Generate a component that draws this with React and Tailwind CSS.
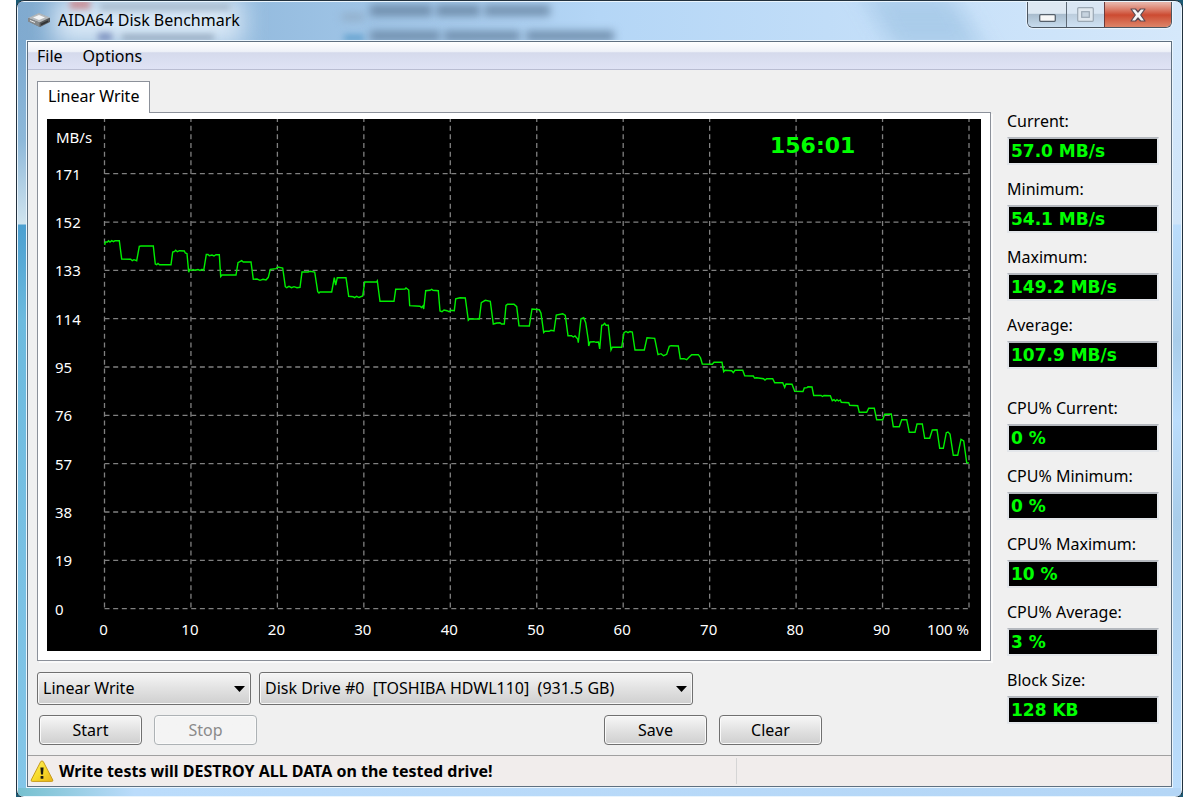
import { useState } from 'react'

const READOUTS = [
  { id: 'current', label: 'Current:', value: '57.0 MB/s' },
  { id: 'minimum', label: 'Minimum:', value: '54.1 MB/s' },
  { id: 'maximum', label: 'Maximum:', value: '149.2 MB/s' },
  { id: 'average', label: 'Average:', value: '107.9 MB/s' },
]

const CPU_READOUTS = [
  { id: 'cpu-current', label: 'CPU% Current:', value: '0 %' },
  { id: 'cpu-minimum', label: 'CPU% Minimum:', value: '0 %' },
  { id: 'cpu-maximum', label: 'CPU% Maximum:', value: '10 %' },
  { id: 'cpu-average', label: 'CPU% Average:', value: '3 %' },
  { id: 'block-size', label: 'Block Size:', value: '128 KB' },
]

const SPEEDS = [171, 152, 133, 114, 95, 76, 57, 38, 19, 0]
const PERCENTS = [0, 10, 20, 30, 40, 50, 60, 70, 80, 90]

const TRACE = `104.7,245 105.3,242 107.5,242 108.5,240.7 110,242 111.7,240.7 113.5,241.7 115,240.7 119.3,240.7 121.7,259
130.7,259.3 132.3,260.7 134,259.7 136.7,260.7 139.3,246.3 141,246 153.3,246 155.3,264 156.7,264.7 158,263.5 159.5,264.7
171,264.7 172.7,252 174.7,251.3 175.7,250.3 177.3,251.7 179.5,250.7 184.3,251 185.3,253 187,253.7 188.7,272.3 189.7,269.5
191.3,270.5 193,269.5 195,270.3 198,269.5 200,270.5 202,269.3 203.7,270.3 205.3,260.7 206.3,254.5 208,254.5 209.3,255.7
212,255 214,256 216,254.7 219.3,254.7 220.7,276.5 222,275 236,275 238,262.7 241.7,260.7 243.3,262 251,262 253.3,279.3
257,279 260,280.3 263,279.3 266,280 268.3,277.3 270.3,269.3 276,268.7 277.7,267 282.7,268 285.3,286.7 286.7,287.7
289,286.3 291.5,287.7 294,286.7 297,287.7 300,287.3 302,272 308,272 310,271.3 314.7,272 317.7,291.7 319,293 320,292
331.7,292 334.3,277.7 335.7,285 337.3,277.7 346,277.7 348.7,296.3 353,296.7 354.5,297.7 356.7,296.3 359,297.5 362.7,296
364.7,282 376.5,282 377.3,280.7 380,301.3 394,301.3 395.7,289.3 405,289 406,288 408.7,290 409.7,305.7 420,306.3
421.5,307.5 423,306 423.7,309 425.7,290.7 430,290.3 431.7,289.3 433,290.3 438.3,290.7 440,311 442,311.7 444,310 447,310.7
449,311.7 451,310.3 454.3,310.7 455.7,298.7 460,297.7 465.3,298 468.3,320.3 469.5,319 479.3,319 481.3,302.7 485.3,300.3
490.3,301.3 493.3,324 497,323 500,322.7 501.5,324 504.3,324 506,305.3 507.5,304.3 514,304.3 516.7,306.7 519,325.7
529.3,326 532,309 539.3,309.7 541,313.3 543.7,332.5 545,331.3 549,331.3 551,330.3 554,331 556.3,315 562.7,313.7
565.3,315.3 568,335.7 571.5,335.7 573.3,337 575,336 577.7,339 578.3,342.7 581,318.7 583.7,317.7 585.7,322.7 588.3,340
588.7,346 590,342 594,341.7 596,342.3 598.5,342 599.7,349 601.7,325.3 603,325 604.7,323.3 606,325.3 608.3,325.3 611,350
612.3,347.3 621.7,347.3 624,332.7 626,331.5 628,332.7 630,331.5 632.3,332 635,350 644.3,350 647,337.7 654.7,338.3
658,354.7 661,353.7 663.5,355.7 666.7,354.3 669.3,346.3 671,345.7 678.3,346 680.3,358.7 684,358.7 686.7,359.7 689,357.3
691.7,354.7 698.3,354.7 700.5,357.7 702.3,364 712.3,364.3 714,362.3 722,362.3 723.7,371.7 725,370.3 731.7,370.7
733.3,372.7 735,370.3 742.7,370.3 744.7,375.7 753.3,376 754.5,378 756.7,377.7 763.5,378.7 765,380 766.7,378.7
772.7,378.7 774.7,382.7 782.7,382.7 784.7,387.3 786,384 792,384.3 794.7,391.3 803,391.5 804.3,388 807,387.7 808,386.7
812,387 813.7,395.5 821,395.5 822.5,396.5 824,395.5 830.3,395.7 832.3,400.7 834,399.7 835.5,401 837,399.7 838.5,401
840.3,400 841.3,402.3 848.7,402.7 849.7,405.3 857.7,405.7 859.3,412.3 866.7,412.3 868.7,408.3 874.3,408.3 876.7,419.7
882.7,419.7 884.7,414.3 891.3,414 893.3,426.7 899.3,426.7 901.7,419.7 906.7,419.7 909.3,432.3 915,432.3 917,424
922.3,424 924.7,438.3 929.7,438.3 932.3,430 937,429.7 939.7,448.3 943.3,448.3 946.3,432.7 948,432 950,434 953.3,455.3
957.7,455.3 961,439.3 963.7,441 966.7,462.7 969,463`

function DriveIcon() {
  return (
    <svg className="h-[22px] w-[22px]" viewBox="0 0 22 22" aria-hidden="true">
      <path d="M0 9.5 11 4.5 22 9 22 13 12 18 0 12Z" fill="#55585b" />
      <path d="M0 9 11 4 22 8.5 11.5 13.5Z" fill="#b4b8bb" />
      <path d="M5 8.6 11 6 17 8.4 11 11Z" fill="#f3f4f5" />
      <path d="M0 9 11.5 13.5V18L0 12.5Z" fill="#85898c" />
      <path d="M2 11.5 7 13.5" stroke="#e8e8e8" strokeWidth="1" />
      <path d="M13 15.5 20 12.3" stroke="#303234" strokeWidth="1.5" />
    </svg>
  )
}

function WarningIcon() {
  return (
    <svg className="h-[22px] w-[24px]" viewBox="0 0 24 22" aria-hidden="true">
      <defs>
        <linearGradient id="warn" x1="0" y1="0" x2="1" y2="1">
          <stop offset="0" stopColor="#fff36b" />
          <stop offset="0.5" stopColor="#f8dc2c" />
          <stop offset="1" stopColor="#e9b517" />
        </linearGradient>
      </defs>
      <path
        d="M10.7 1.6Q12 .2 13.3 1.6L22.8 20Q23.2 21.4 21.8 21.4H2.2Q.8 21.4 1.2 20Z"
        fill="url(#warn)"
        stroke="#c79b1d"
        strokeWidth="1"
      />
      <path d="M10.4 7.5h3.2l-.6 7h-2Z" fill="#1c1a12" />
      <rect x="10.6" y="16" width="2.8" height="2.8" rx=".6" fill="#1c1a12" />
    </svg>
  )
}

function CaptionButtons() {
  return (
    <div className="relative flex h-[26px] overflow-hidden rounded-b-md border border-t-0 border-[#4b5661] shadow-[0_0_1px_1px_rgba(255,255,255,0.6)]">
      <button
        aria-label="Minimize"
        className="flex w-[39px] items-end justify-center border-r border-[#5d6975] bg-linear-to-b from-[#dde8f2] from-45% via-[#a9bccd] via-50% to-[#c8dcee] pb-[5px]"
      >
        <svg className="h-[8px] w-[17px]" viewBox="0 0 17 8" aria-hidden="true">
          <rect x=".7" y=".7" width="15.6" height="6.6" rx="1" fill="#f7f7f7" stroke="#56606b" strokeWidth="1.3" />
        </svg>
      </button>
      <button
        aria-label="Maximize"
        disabled
        className="flex w-[38px] items-center justify-center border-r border-[#6d3a3a] bg-linear-to-b from-[#d9e6f3] from-45% via-[#bccddd] via-50% to-[#cfe2f4]"
      >
        <svg className="h-[15px] w-[17px]" viewBox="0 0 17 15" aria-hidden="true">
          <rect x=".7" y=".7" width="15.6" height="13.6" rx="1" fill="#dfe7ee" stroke="#9ba8b4" strokeWidth="1.2" />
          <rect x="4.7" y="4.7" width="7.6" height="5.6" fill="#c6d3df" stroke="#9ba8b4" strokeWidth="1.2" />
        </svg>
      </button>
      <button
        aria-label="Close"
        className="flex w-[66px] items-center justify-center bg-linear-to-b from-[#e5b1a6] from-5% via-[#cc4a31] via-52% to-[#dd8468]"
      >
        <svg className="h-[14px] w-[16px]" viewBox="0 0 16 14" aria-hidden="true">
          <path
            d="M1 1H5.5L8 4 10.5 1H15L10.7 7 15 13H10.5L8 10 5.5 13H1L5.3 7Z"
            fill="#f6f6f6"
            stroke="#5a4a52"
            strokeWidth="1.2"
            strokeLinejoin="round"
          />
        </svg>
      </button>
    </div>
  )
}

function TitleBar() {
  return (
    <header className="relative flex h-[38px] items-start justify-between overflow-hidden bg-linear-to-r from-[#80aacf] via-[#b4d6f6] via-50% to-[#d5e8fb] pr-[9px] pl-[10px]">
      {/* things on the desktop seen through the glass */}
      <div className="absolute top-[-5px] left-[35px] h-[48px] w-[190px] bg-[#d9e8f6] blur-md" />
      <div className="absolute top-[-2px] left-[52px] h-[9px] w-[20px] bg-[#c98f97] blur-[3px]" />
      <div className="absolute top-[2px] left-[82px] h-[6px] w-[130px] bg-[#a3b5c8] blur-[3px]" />
      <div className="absolute top-[31px] left-[80px] h-[8px] w-[14px] bg-[#7f93c0] blur-[3px]" />
      <div className="absolute top-[33px] left-[104px] h-[5px] w-[92px] bg-[#8fa3b8] blur-[3px]" />
      <div className="absolute top-[12px] left-[324px] h-[6px] w-[22px] bg-[#8fa9c2] blur-[4px]" />
      <div className="absolute top-[3px] left-[352px] h-[11px] w-[62px] bg-[#6f8dab] blur-[4px]" />
      <div className="absolute top-[3px] left-[418px] h-[11px] w-[44px] bg-[#6f8dab] blur-[4px]" />
      <div className="absolute top-[3px] left-[466px] h-[11px] w-[66px] bg-[#7391af] blur-[4px]" />
      <div className="absolute top-[33px] left-[326px] h-[6px] w-[20px] bg-[#5f9fcd] blur-[3px]" />
      <div className="absolute top-[29px] left-[352px] h-[10px] w-[70px] bg-[#6f8dab] blur-[4px]" />
      <div className="absolute top-[29px] left-[426px] h-[10px] w-[76px] bg-[#6f8dab] blur-[4px]" />
      <div className="absolute top-[29px] left-[508px] h-[10px] w-[88px] bg-[#6f8dab] blur-[4px]" />
      <div className="absolute top-[-10px] left-[860px] h-[60px] w-[90px] skew-x-[30deg] bg-[#aaccea] blur-md" />
      <h1 className="relative flex items-center gap-[8px] pt-[6px] text-[16px] leading-[24px]">
        <DriveIcon />
        AIDA64 Disk Benchmark
      </h1>
      <CaptionButtons />
    </header>
  )
}

function Chart() {
  const gridX = (i) => 104.5 + i * 86.45
  const gridY = (i) => 173.7 + i * 48.33

  return (
    <svg
      className="block w-full bg-black font-['Noto_Sans',sans-serif] text-[15px]"
      viewBox="47 119 934 532"
      role="img"
      aria-label="Linear write speed over disk position"
    >
      <g stroke="#808080" strokeWidth="1.3" strokeDasharray="5 3.67">
        {[...PERCENTS, 100].map((p, i) => (
          <line key={p} x1={gridX(i)} x2={gridX(i)} y1="117" y2="608.7" />
        ))}
        {SPEEDS.map((s, i) => (
          <line key={s} x1="104.5" x2="969" y1={gridY(i)} y2={gridY(i)} />
        ))}
      </g>
      <g fill="#fff">
        <text x="56" y="143">MB/s</text>
        {SPEEDS.map((s, i) => (
          <text key={s} x="55" y={gridY(i) + 6}>{s}</text>
        ))}
        {PERCENTS.map((p, i) => (
          <text key={p} x={gridX(i) - 1} y="635" textAnchor="middle">{p}</text>
        ))}
        <text x="969" y="635" textAnchor="end">100 %</text>
      </g>
      <text x="770" y="153" fill="#00ff00" className="font-['DejaVu_Sans',sans-serif] text-[22px] font-bold">
        156:01
      </text>
      <polyline points={TRACE} fill="none" stroke="#00ee00" strokeWidth="1.4" />
    </svg>
  )
}

function Readout({ id, label, value }) {
  return (
    <div className="flex h-[68px] flex-col">
      <label htmlFor={id} className="h-[26px] leading-[20px]">{label}</label>
      <input
        id={id}
        readOnly
        value={value}
        className="h-[28px] w-full border-2 border-[#e3e6ea] border-t-[#b4b8be] bg-black pl-[2px] font-['DejaVu_Sans',sans-serif] text-[17px] font-bold text-[#00ff00] outline-none"
      />
    </div>
  )
}

function Select({ label, options, className }) {
  return (
    <div className={`relative ${className}`}>
      <select
        aria-label={label}
        className="h-[33px] w-full appearance-none rounded-[3px] border border-[#707070] bg-linear-to-b from-[#f2f2f2] from-10% via-[#e2e2e2] via-50% to-[#cfcfcf] pb-px pl-[5px] shadow-[inset_0_0_0_1px_#f8f8f8]"
      >
        {options.map((o) => (
          <option key={o}>{o}</option>
        ))}
      </select>
      <svg className="pointer-events-none absolute top-[14px] right-[6px] h-[6px] w-[11px]" viewBox="0 0 11 6" aria-hidden="true">
        <path d="M0 0H11L5.5 6Z" fill="#000" />
      </svg>
    </div>
  )
}

function Button({ children, ...props }) {
  return (
    <button
      className="h-[30px] w-[103px] rounded-[4px] border border-[#707070] bg-linear-to-b from-[#f3f3f3] from-10% via-[#e2e2e2] via-50% to-[#cfcfcf] pb-px shadow-[inset_0_0_0_1px_#fafafa] disabled:border-[#adb2b5] disabled:from-[#f4f4f4] disabled:via-[#f4f4f4] disabled:to-[#f4f4f4] disabled:text-[#8a8a8a]"
      {...props}
    >
      {children}
    </button>
  )
}

function App() {
  const [running, setRunning] = useState(false)

  return (
    <div className="min-h-screen bg-white pr-[17px] pl-4 font-['Noto_Sans',sans-serif] text-[16px] leading-[20px] text-black">
      <div className="bg-[#1b5a74]">
        <div className="overflow-hidden rounded-[8px] border border-[#22313e] bg-[#eaf5fd] p-px">
          <TitleBar />
          <div className="flex">
            <div className="w-[8px] shrink-0 bg-[linear-gradient(to_bottom,#7ba9d0,#8db8d9_100px,#d0e4ef_184px,#4b9fd0_185px,#6cbade_280px,#84c6e8)]" />
            <main className="min-w-0 flex-1 border border-[#eaf5fd]">
              <div className="border border-[#5f7080] bg-[#f0f0f0]">
                <nav className="flex h-[28px] items-center gap-[20px] border-b border-[#b9bdd2] bg-[linear-gradient(to_bottom,#fff,#eef1f8_35%,#d5daec_40%,#dfe3f5)] pl-[9px]">
                  <button>File</button>
                  <button>Options</button>
                </nav>

                <div className="flex gap-4 pr-[12px] pl-[9px]">
                  <section className="min-w-0 flex-1 pt-[11px] pb-[10px]">
                    <div role="tablist" className="flex">
                      <button
                        role="tab"
                        aria-selected="true"
                        className="relative -mb-px h-[32px] border border-b-0 border-[#8c919a] bg-white px-[10px] pb-[3px]"
                      >
                        Linear Write
                      </button>
                    </div>
                    <div role="tabpanel" className="border border-[#8c919a] bg-white px-[9px] pt-[6px] pb-[9px] shadow-[2px_2px_0_#fafafa]">
                      <Chart />
                    </div>

                    <div className="mt-[11px] flex gap-2">
                      <Select label="Test" className="w-[214px]" options={['Linear Write', 'Linear Read']} />
                      <Select
                        label="Drive"
                        className="w-[434px]"
                        options={['Disk Drive #0\u00a0 [TOSHIBA HDWL110]\u00a0 (931.5 GB)']}
                      />
                    </div>
                    <div className="mt-[10px] flex gap-3 pl-[2px]">
                      <Button onClick={() => setRunning(true)}>Start</Button>
                      <Button disabled={!running} onClick={() => setRunning(false)}>Stop</Button>
                      <div className="ml-[335px] flex gap-3">
                        <Button>Save</Button>
                        <Button>Clear</Button>
                      </div>
                    </div>
                  </section>

                  <aside className="w-[152px] shrink-0 pt-[41px]">
                    {READOUTS.map((r) => (
                      <Readout key={r.id} {...r} />
                    ))}
                    <div className="mt-[15px]">
                      {CPU_READOUTS.map((r) => (
                        <Readout key={r.id} {...r} />
                      ))}
                    </div>
                  </aside>
                </div>

                <footer className="flex h-[31px] items-center border-t border-[#a0a0a0] bg-[#f1edec]">
                  <div className="flex h-[26px] w-[709px] items-center gap-[5px] border-r border-[#d5d5d5] pl-[2px] font-bold">
                    <WarningIcon />
                    <span>Write tests will DESTROY ALL DATA on the tested drive!</span>
                  </div>
                </footer>
              </div>
            </main>
            <div className="w-[8px] shrink-0 bg-[linear-gradient(to_bottom,#d3e8fc,#cfe4f8_184px,#bbddfc_185px,#a9cdea_300px,#bbddfc_380px,#a9cdea_480px,#bbddfc)]" />
          </div>
          <div className="h-[8px] bg-linear-to-r from-[#76c0cf] via-[#bbdcfb] via-10% to-[#b4d6f6]" />
        </div>
      </div>
    </div>
  )
}

export default App
